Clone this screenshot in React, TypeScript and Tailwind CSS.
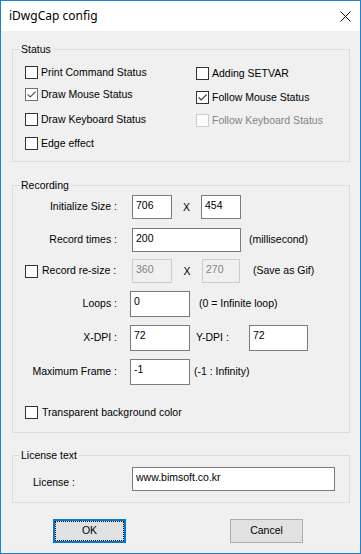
import type { ReactNode } from "react";

type CheckProps = {
  label: string;
  checked?: boolean;
  disabled?: boolean;
  muted?: boolean;
  className?: string;
};

function CheckBox({ checked, disabled, muted }: Omit<CheckProps, "label" | "className">) {
  const tone = disabled
    ? "border-[#cccccc] bg-[#fcfcfc]"
    : muted
      ? "border-[#707070] bg-white"
      : "border-[#333333] bg-white";
  return (
    <span className={`flex h-[13px] w-[13px] shrink-0 items-center justify-center border ${tone}`}>
      {checked ? (
        <svg width="11" height="11" viewBox="0 0 11 11">
          <path d="M1.6 5.4 L4.2 8 L9.6 2.6" fill="none" stroke={muted ? "#555555" : "#333333"} strokeWidth="1.2" />
        </svg>
      ) : null}
    </span>
  );
}

function CheckRow({ label, checked, disabled, muted, className }: CheckProps) {
  return (
    <div className={`flex h-[13px] items-center gap-[3px] ${className ?? ""}`}>
      <CheckBox checked={checked} disabled={disabled} muted={muted} />
      <span className={`whitespace-nowrap ${disabled ? "text-[#838383]" : "text-black"}`}>{label}</span>
    </div>
  );
}

function TextBox({ value, className, disabled }: { value: string; className: string; disabled?: boolean }) {
  return (
    <div
      className={`shrink-0 border pl-[3px] pt-[3px] leading-[13px] ${
        disabled ? "border-[#cccccc] bg-[#f0f0f0] text-[#838383]" : "border-[#7a7a7a] bg-white text-black"
      } ${className}`}
    >
      {value}
    </div>
  );
}

function GroupBox({ title, className, children }: { title: string; className: string; children: ReactNode }) {
  return (
    <fieldset className={`ml-[11px] w-[338px] shrink-0 border border-[#dcdcdc] p-0 ${className}`}>
      <legend className="ml-[6px] px-[2px] leading-[14px]">{title}</legend>
      {children}
    </fieldset>
  );
}

function Label({ children }: { children: ReactNode }) {
  return <div className="w-[104px] shrink-0 whitespace-nowrap text-right">{children}</div>;
}

export default function App() {
  return (
    <div className="flex h-[554px] w-[361px] flex-col border border-[#1883d7] bg-white font-['Liberation_Sans',Arial,sans-serif] text-[10.5px] text-black">
      <div className="flex h-[30px] shrink-0 items-center bg-white pl-[8px]">
        <span className="font-['Noto_Sans',sans-serif] text-[12px]">iDwgCap config</span>
        <svg className="ml-auto mr-[9px]" width="11" height="11" viewBox="0 0 11 11">
          <path d="M0.5 0.5 L10.5 10.5 M10.5 0.5 L0.5 10.5" stroke="#111111" strokeWidth="1" />
        </svg>
      </div>

      <div className="flex flex-1 flex-col bg-[#f0f0f0] pt-[11px]">
        <GroupBox title="Status" className="h-[120px]">
          <div className="flex pl-[12px]">
            <div className="flex w-[171px] flex-col pt-[10px]">
              <CheckRow label="Print Command Status" />
              <CheckRow label="Draw Mouse Status" checked muted className="mt-[9px]" />
              <CheckRow label="Draw Keyboard Status" className="mt-[12px]" />
              <CheckRow label="Edge effect" className="mt-[11px]" />
            </div>
            <div className="flex flex-col pt-[11px]">
              <CheckRow label="Adding SETVAR" />
              <CheckRow label="Follow Mouse Status" checked className="mt-[11px]" />
              <CheckRow label="Follow Keyboard Status" disabled className="mt-[10px]" />
            </div>
          </div>
        </GroupBox>

        <GroupBox title="Recording" className="mt-[16px] h-[255px]">
          <div className="flex flex-col">
            <div className="mt-[3px] flex h-[24px] items-center">
              <Label>Initialize Size :</Label>
              <TextBox value="706" className="ml-[15px] h-[24px] w-[40px]" />
              <div className="w-[29px] pt-[2px] text-center">X</div>
              <TextBox value="454" className="h-[24px] w-[40px]" />
            </div>

            <div className="mt-[9px] flex h-[24px] items-center">
              <Label>Record times :</Label>
              <TextBox value="200" className="ml-[15px] h-[24px] w-[109px]" />
              <span className="ml-[8px]">(millisecond)</span>
            </div>

            <div className="mt-[7px] flex h-[24px] items-center">
              <div className="flex w-[104px] shrink-0 items-center gap-[4px] pl-[12px]">
                <CheckBox />
                <span className="whitespace-nowrap">Record re-size :</span>
              </div>
              <TextBox value="360" disabled className="ml-[15px] h-[24px] w-[40px]" />
              <div className="w-[30px] pt-[2px] text-center">X</div>
              <TextBox value="270" disabled className="h-[24px] w-[38px]" />
              <span className="ml-[13px]">(Save as Gif)</span>
            </div>

            <div className="mt-[8px] flex h-[26px] items-center">
              <Label>Loops :</Label>
              <TextBox value="0" className="ml-[13px] h-[26px] w-[60px]" />
              <span className="ml-[9px]">(0 = Infinite loop)</span>
            </div>

            <div className="mt-[8px] flex h-[26px] items-center">
              <Label>X-DPI :</Label>
              <TextBox value="72" className="ml-[13px] h-[26px] w-[60px]" />
              <span className="w-[59px] shrink-0 pl-[6px]">Y-DPI :</span>
              <TextBox value="72" className="h-[26px] w-[59px]" />
            </div>

            <div className="mt-[8px] flex h-[26px] items-center">
              <Label>Maximum Frame :</Label>
              <TextBox value="-1" className="ml-[13px] h-[26px] w-[60px]" />
              <span className="ml-[4px]">(-1 : Infinity)</span>
            </div>

            <div className="mt-[21px] pl-[12px]">
              <CheckRow label="Transparent background color" className="gap-[4px]" />
            </div>
          </div>
        </GroupBox>

        <GroupBox title="License text" className="mt-[15px] h-[55px]">
          <div className="mt-[5px] flex items-start">
            <div className="w-[119px] shrink-0 pl-[20px] pt-[8px]">License :</div>
            <TextBox value="www.bimsoft.co.kr" className="h-[24px] w-[203px]" />
          </div>
        </GroupBox>

        <div className="ml-[52px] mt-[16px] flex">
          <button
            type="button"
            className="h-[24px] w-[73px] border-2 border-[#0078d7] bg-[#e1e1e1] p-0"
          >
            <div className="flex h-full w-full items-center justify-center border border-dotted border-black">
              OK
            </div>
          </button>
          <button
            type="button"
            className="ml-[104px] flex h-[24px] w-[73px] items-center justify-center border border-[#adadad] bg-[#e1e1e1]"
          >
            Cancel
          </button>
        </div>
      </div>
    </div>
  );
}
